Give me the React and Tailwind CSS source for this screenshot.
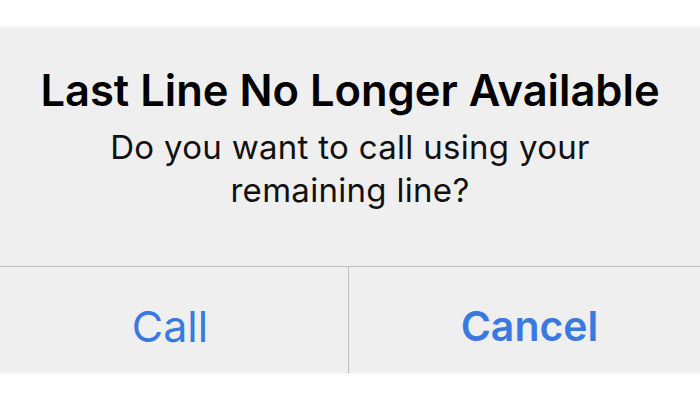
export default function App() {
    return (
        <div className="w-[700px] h-[400px] bg-white flex flex-col" style={{ fontFamily: "Inter, 'Noto Sans', sans-serif" }}>
            {/* top white strip */}
            <div className="h-[27px]" />

            {/* alert panel */}
            <div className="h-[346px] bg-[#efeff0] flex flex-col">
                {/* title + message */}
                <div className="h-[239px] flex flex-col items-center pt-[37px]">
                    <h2 className="text-[43.5px] font-semibold text-black leading-[53px]">
                        Last Line No Longer Available
                    </h2>
                    <p className="mt-[9px] text-[33px] text-[#111] text-center leading-[43px] tracking-[0.3px]">
                        Do you want to call using your
                        <br />
                        remaining line?
                    </p>
                </div>

                {/* buttons */}
                <div className="flex-1 flex border-t border-[#bdbdbd]">
                    <button className="w-[349px] border-r border-[#bdbdbd] pt-[12px] pr-[8px] text-[43px] text-[#3a7ae0] leading-none">
                        Call
                    </button>
                    <button className="flex-1 pt-[12px] pl-[10px] text-[41px] font-semibold text-[#3a7ae0] leading-none">
                        Cancel
                    </button>
                </div>
            </div>
        </div>
    );
}
